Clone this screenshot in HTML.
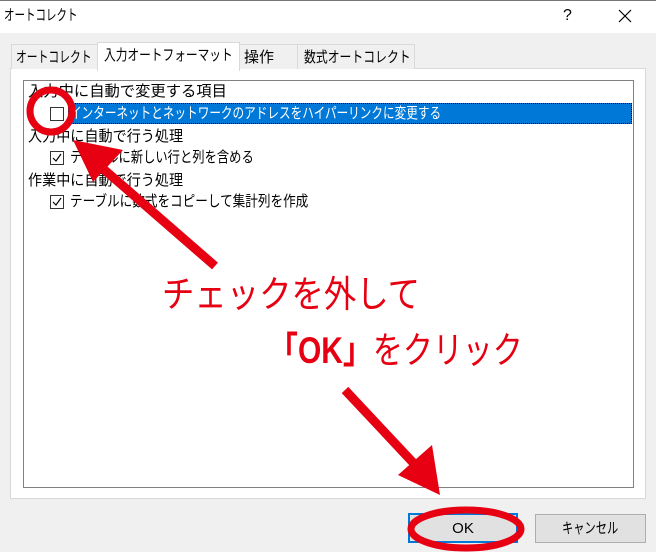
<!DOCTYPE html>
<html><head><meta charset="utf-8"><style>
body{margin:0;width:656px;height:552px;background:#f0f0f0;position:relative;overflow:hidden;font-family:"Liberation Sans","Noto Sans CJK JP",sans-serif;color:#000}
.a{position:absolute}
.t{font-size:15px;white-space:nowrap;line-height:20px;transform-origin:0 50%}
.cb{position:absolute;width:12px;height:12px;border:1px solid #333;background:#fff}
</style></head><body>
<div class="a" style="left:0;top:0;width:656px;height:32px;background:#fff;border-top:1px solid #777"></div>
<div class="a t" style="left:4px;top:6px;transform:scaleX(0.7)">オートコレクト</div>
<div class="a t" style="left:563px;top:6px;font-size:16px">?</div>
<svg class="a" style="left:618px;top:9px" width="14" height="14"><path d="M1 1L13 13M13 1L1 13" stroke="#000" stroke-width="1.2"/></svg>
<!-- tabs -->
<div class="a" style="left:10px;top:68px;width:634px;height:429px;background:#fff;border:1px solid #d9d9d9"></div>
<div class="a" style="left:11px;top:44px;width:85px;height:24px;border:1px solid #d9d9d9;border-bottom:none;background:#f0f0f0"></div>
<div class="a t" style="left:16px;top:48px;transform:scaleX(0.72)">オートコレクト</div>
<div class="a" style="left:97px;top:42px;width:141px;height:28px;border:1px solid #d9d9d9;border-bottom:none;background:#fff"></div>
<div class="a t" style="left:104px;top:46px;transform:scaleX(0.78)">入力オートフォーマット</div>
<div class="a" style="left:239px;top:44px;width:57px;height:24px;border:1px solid #d9d9d9;border-bottom:none;background:#f0f0f0"></div>
<div class="a t" style="left:244px;top:48px">操作</div>
<div class="a" style="left:297px;top:44px;width:116px;height:24px;border:1px solid #d9d9d9;border-bottom:none;background:#f0f0f0"></div>
<div class="a t" style="left:304px;top:48px;transform:scaleX(0.79)">数式オートコレクト</div>
<!-- listbox -->
<div class="a" style="left:23px;top:80px;width:609px;height:406px;border:1px solid #828282;background:#fff"></div>
<div class="a t" style="left:28px;top:82px;transform:scaleX(1.02)">入力中に自動で変更する項目</div>
<div class="a" style="left:68px;top:103px;width:564px;height:21px;background:#0078d7;outline:1px dotted #000;outline-offset:-1px"></div>
<div class="cb" style="left:50px;top:107px"></div>
<div class="a t" style="left:70px;top:104px;color:#fff;transform:scaleX(0.774)">インターネットとネットワークのアドレスをハイパーリンクに変更する</div>
<div class="a t" style="left:28px;top:127px;transform:scaleX(0.94)">入力中に自動で行う処理</div>
<div class="cb" style="left:50px;top:151px"></div>
<svg class="a" style="left:51px;top:152px" width="12" height="12"><path d="M2 6L5 9L10 2" stroke="#000" stroke-width="1.2" fill="none"/></svg>
<div class="a t" style="left:70px;top:148px;transform:scaleX(0.82)">テーブルに新しい行と列を含める</div>
<div class="a t" style="left:28px;top:171px;transform:scaleX(0.94)">作業中に自動で行う処理</div>
<div class="cb" style="left:50px;top:195px"></div>
<svg class="a" style="left:51px;top:196px" width="12" height="12"><path d="M2 6L5 9L10 2" stroke="#000" stroke-width="1.2" fill="none"/></svg>
<div class="a t" style="left:70px;top:192px;transform:scaleX(0.84)">テーブルに数式をコピーして集計列を作成</div>
<!-- buttons -->
<div class="a" style="left:408px;top:513px;width:106px;height:26px;border:2px solid #0078d7;background:#e1e1e1"></div>
<div class="a t" style="left:408px;top:519px;width:110px;text-align:center">OK</div>
<div class="a" style="left:535px;top:514px;width:109px;height:27px;border:1px solid #adadad;background:#e1e1e1"></div>
<div class="a t" style="left:562px;top:519px;transform:scaleX(0.75)">キャンセル</div>
<!-- annotations -->
<svg class="a" style="left:0;top:0" width="656" height="552">
<circle cx="51" cy="111" r="21" fill="none" stroke="#e60012" stroke-width="7"/>
<line x1="215" y1="266" x2="100" y2="166" stroke="#e60012" stroke-width="9"/>
<polygon points="73,140 123,150 93,182" fill="#e60012"/>
<line x1="345" y1="390" x2="420" y2="470" stroke="#e60012" stroke-width="9"/>
<polygon points="440,495 398,475 432,445" fill="#e60012"/>
<ellipse cx="466" cy="529" rx="55" ry="19" fill="none" stroke="#e60012" stroke-width="7"/>
</svg>
<div class="a" style="left:162px;top:270px;font-size:37px;color:#e60012;white-space:nowrap;line-height:50px;transform:scaleX(0.875);transform-origin:0 50%">チェックを外して</div>
<div class="a" style="left:268px;top:326px;font-size:37px;color:#e60012;white-space:nowrap;line-height:50px;font-weight:bold;transform:scaleX(0.81);transform-origin:0 50%">「OK」<span style="font-weight:normal">をクリック</span></div>
</body></html>
